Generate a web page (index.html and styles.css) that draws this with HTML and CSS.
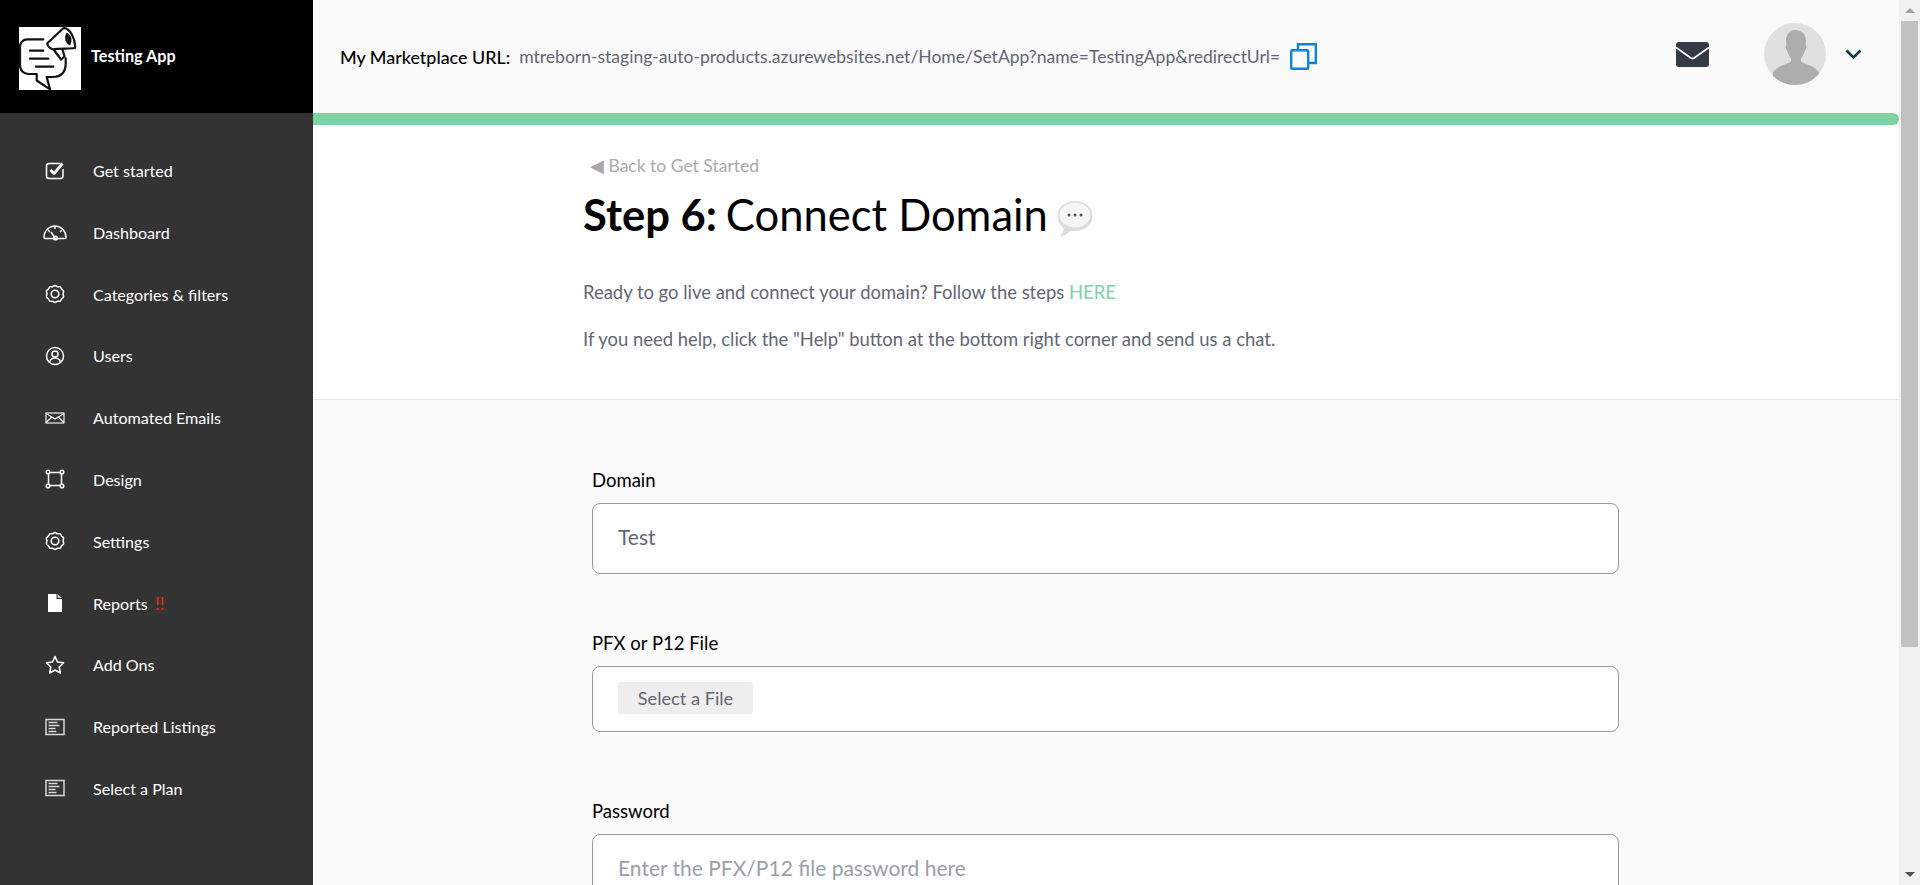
FILE: index.html
```html
<!DOCTYPE html>
<html lang="en">
<head>
<meta charset="utf-8">
<title>Testing App</title>
<link rel="stylesheet" href="styles.css">
</head>
<body>
<div class="app">
  <aside class="sidebar">
    <div class="brand">
      <div class="logo">
        <svg viewBox="0 0 62 63" width="62" height="63" fill="none" stroke="#111" stroke-width="2.2" stroke-linecap="round" stroke-linejoin="round">
          <path d="M24.300 12.300H8.500C4 12.300 1 15.500 1 19.700V38c0 5.500 3.500 9 8.300 9h8.400v6.500L31 62.300 27.700 50h5.800c8 0 13.200-4 13.200-13.700v-5"/>
          <path d="M11 23.700h13.300M11 31.700h18.300M17 39.700h17.300"/>
          <path d="M28.300 16.300 44.300 1.300C50 0 57 12 56 21c-6 1-16 0-22 1.500-3-1-6-4.500-5.700-6.200z"/>
          <path d="M35 23l7 9.500 3.500-3-2-7"/>
          <path d="M48 7c3 2 4 6 2.500 10-3-2-4-6-2.500-10z" fill="#111"/>
        </svg>
      </div>
      <span class="brand-name">Testing App</span>
    </div>
    <nav class="nav">
      <a class="nav-item"><svg class="nav-icon" viewBox="0 0 20 20"><path d="M15.500 3.500H4c-1.500 0-2.500 1-2.500 2.500v10c0 1.500 1 2.500 2.500 2.500h11.500c1.500 0 2.500-1 2.500-2.500V9" class="ln"/><path d="M5.500 10l3.500 3.500 8.500-10" class="ln thick"/></svg><span>Get started</span></a>
      <a class="nav-item"><svg class="nav-icon nav-icon-wide" viewBox="0 0 24 20"><path d="M1 15.500C1 9 6 4 12 4s11 5 11 11.500c0 .5-.3 1-1 1H2c-.7 0-1-.5-1-1z" class="ln"/><path d="M12 4v3M5 8l2 2M19 8l-2 2M8 10l4 6" class="ln"/><circle cx="12.500" cy="16" r="1.800" class="ln"/></svg><span>Dashboard</span></a>
      <a class="nav-item"><svg class="nav-icon" viewBox="0 0 20 20"><path d="M10 1.500c1 0 1.500 1 2.500 1.200s2-.4 2.800.2.700 1.700 1.400 2.400 1.700 1 1.900 1.900-.6 1.800-.6 2.800.8 1.900.6 2.800-1.200 1.200-1.900 1.900-.6 1.800-1.400 2.400-1.800 0-2.800.2-1.500 1.200-2.500 1.200-1.500-1-2.500-1.200-2 .4-2.800-.2-.7-1.700-1.400-2.400-1.700-1-1.900-1.900.6-1.800.6-2.800-.8-1.900-.6-2.800 1.200-1.200 1.900-1.900.6-1.800 1.400-2.400 1.800 0 2.800-.2 1.500-1.200 2.500-1.200z" class="ln"/><circle cx="10" cy="10" r="3.800" class="ln"/></svg><span>Categories &amp; filters</span></a>
      <a class="nav-item"><svg class="nav-icon" viewBox="0 0 20 20"><circle cx="10" cy="10" r="8.500" class="ln"/><circle cx="10" cy="8" r="3" class="ln"/><path d="M4.500 16c1-3 3-4 5.500-4s4.500 1 5.500 4" class="ln"/></svg><span>Users</span></a>
      <a class="nav-item"><svg class="nav-icon" viewBox="0 0 20 20"><rect x="1" y="5" width="18" height="10" class="ln thin"/><path d="M1 5.500l9 5.500 9-5.500M1 14.500l6-5.500M19 14.500 13 9" class="ln thin"/></svg><span>Automated Emails</span></a>
      <a class="nav-item"><svg class="nav-icon" viewBox="0 0 20 20"><path d="M3.500 5v10M16.500 5v10M5 3.500h10M5 16.500h10" class="ln"/><circle cx="3" cy="3" r="1.800" class="ln"/><circle cx="17" cy="3" r="1.800" class="ln"/><circle cx="3" cy="17" r="1.800" class="ln"/><circle cx="17" cy="17" r="1.800" class="ln"/></svg><span>Design</span></a>
      <a class="nav-item"><svg class="nav-icon" viewBox="0 0 20 20"><path d="M10 1.500c1 0 1.500 1 2.500 1.200s2-.4 2.800.2.700 1.700 1.400 2.400 1.700 1 1.900 1.900-.6 1.800-.6 2.800.8 1.900.6 2.800-1.200 1.200-1.900 1.900-.6 1.800-1.400 2.400-1.800 0-2.800.2-1.500 1.200-2.500 1.200-1.500-1-2.500-1.200-2 .4-2.800-.2-.7-1.700-1.400-2.400-1.700-1-1.900-1.900.6-1.800.6-2.800-.8-1.900-.6-2.800 1.200-1.200 1.900-1.900.6-1.800 1.400-2.400 1.800 0 2.800-.2 1.500-1.200 2.500-1.200z" class="ln"/><circle cx="10" cy="10" r="3.800" class="ln"/></svg><span>Settings</span></a>
      <a class="nav-item"><svg class="nav-icon" viewBox="0 0 20 20"><path d="M3 1h8.500v5H17v13H3z" fill="#fff"/><path d="M12.500 1 17 5h-4.500z" fill="#ccc"/></svg><span>Reports <b class="alert">!!</b></span></a>
      <a class="nav-item"><svg class="nav-icon" viewBox="0 0 20 20"><path d="M10 1.500l2.600 5.600 6 .7-4.400 4.200 1.200 6L10 15l-5.400 3 1.200-6L1.400 7.800l6-.7z" class="ln"/></svg><span>Add Ons</span></a>
      <a class="nav-item"><svg class="nav-icon" viewBox="0 0 20 20"><rect x="1" y="2.500" width="18" height="15" class="ln soft"/><path d="M3.500 5.500h9M3.500 8.500h11M3.500 11.500h7M3.500 14.500h8" class="ln soft"/></svg><span>Reported Listings</span></a>
      <a class="nav-item"><svg class="nav-icon" viewBox="0 0 20 20"><rect x="1" y="2.500" width="18" height="15" class="ln soft"/><path d="M3.500 5.500h9M3.500 8.500h11M3.500 11.500h7M3.500 14.500h8" class="ln soft"/></svg><span>Select a Plan</span></a>
    </nav>
  </aside>

  <main class="main">
    <header class="topbar">
      <div class="url-row">
        <strong class="url-label">My Marketplace URL:</strong>
        <span class="url-value">mtreborn-staging-auto-products.azurewebsites.net/Home/SetApp?name=TestingApp&amp;redirectUrl=</span>
        <svg class="copy-icon" viewBox="0 0 27 27" width="27" height="27" fill="none" stroke="#0a84e0" stroke-width="2.400"><rect x="1.200" y="7.200" width="17" height="18.600" rx="1"/><path d="M8 7V1.200h17.800V20H18.500"/></svg>
      </div>
      <div class="top-actions">
        <svg class="mail-icon" viewBox="0 0 33 25" width="33" height="25"><rect width="33" height="25" rx="3" fill="#343a46"/><path d="M0 5.500l14.500 10.300c1.200.8 2.800.8 4 0L33 5.500" fill="none" stroke="#fafafa" stroke-width="1.800"/></svg>
        <svg class="avatar" viewBox="0 0 62 62" width="62" height="62"><defs><clipPath id="avatar-clip"><circle cx="31" cy="31" r="31"/></clipPath></defs><circle cx="31" cy="31" r="31" fill="#e0e0e0"/><path clip-path="url(#avatar-clip)" d="M31 7c6.500 0 11 4 11 10 0 2-.3 3.500-.5 5l1 1.500c0 2-1 4-2 5-.7 3-2 5-3.500 7v3c4 3 14 4 18 11l2 13H7l2-13c4-7 14-8 18-11v-3c-1.500-2-2.800-4-3.500-7-1-1-2-3-2-5l1-1.500c-.2-1.500-.5-3-.5-5 0-6 4.500-10 9-10z" fill="#adadad"/></svg>
        <svg class="chevron" viewBox="0 0 17 10" width="17" height="10"><path d="M1.500 1.500l7 7 7-7" fill="none" stroke="#0d3a3f" stroke-width="2.600"/></svg>
      </div>
    </header>
    <div class="progress"></div>

    <section class="hero">
      <a class="back">◀ Back to Get Started</a>
      <h1 class="title"><b>Step 6:</b> Connect Domain
        <svg class="bubble" viewBox="0 0 36 36" width="36" height="36"><path d="M18 1c10 0 17.500 6.500 17.500 15S28 31 18 31c-1.500 0-3-.2-4.400-.5C11 33.500 7 36 3.500 36c1.800-2 3-5 3.200-8C2.800 25 .5 20.800.5 16 .5 7.500 8 1 18 1z" fill="#dcdcdc"/><ellipse cx="18" cy="15" rx="15.500" ry="12.500" fill="#f6f6f6"/><circle cx="12" cy="15" r="1.500" fill="#555"/><circle cx="18" cy="15" r="1.500" fill="#555"/><circle cx="24" cy="15" r="1.500" fill="#555"/></svg>
      </h1>
      <p class="lead">Ready to go live and connect your domain? Follow the steps <a class="here">HERE</a></p>
      <p class="lead">If you need help, click the "Help" button at the bottom right corner and send us a chat.</p>
    </section>

    <section class="form">
      <div class="field field-domain">
        <label class="field-label label-tight">Domain</label>
        <input class="text-input" type="text" value="Test">
      </div>
      <div class="field field-file">
        <label class="field-label label-tight">PFX or P12 File</label>
        <div class="file-box"><button class="file-btn" type="button">Select a File</button></div>
      </div>
      <div class="field">
        <label class="field-label label-tight">Password</label>
        <input class="text-input" type="text" placeholder="Enter the PFX/P12 file password here">
      </div>
    </section>
  </main>

  <div class="scrollbar">
    <div class="sb-btn"><span class="sb-up"></span></div>
    <div class="sb-thumb"></div>
    <div class="sb-track"></div>
    <div class="sb-btn"><span class="sb-down"></span></div>
  </div>
</div>
</body>
</html>
```

FILE: styles.css
```css
* { box-sizing: border-box; }
html, body { margin: 0; height: 100%; overflow: hidden; }
body { font-family: Lato, "Liberation Sans", sans-serif; color: #000; background: #fafafa; }

.app { display: flex; height: 100vh; overflow: hidden; }

/* sidebar */
.sidebar { flex: 0 0 313px; background: #333; color: #fff; }
.brand { height: 113px; background: #000; display: flex; align-items: center; padding: 4px 0 0 19px; gap: 9px; }
.logo { width: 62px; height: 63px; background: #fff; overflow: hidden; line-height: 0; }
.brand-name { font-size: 16.2px; font-weight: 700; margin: 0 0 6px 1px; }
.nav { padding-top: 26.6px; }
.nav-item { height: 61.8px; display: flex; align-items: center; padding-left: 44px; gap: 27px; font-size: 16.1px; color: #fff; }
.nav-icon { width: 22px; height: 20px; flex: none; fill: none; }
.nav-icon-wide { width: 24px; margin: 0 -1px; }
.ln { fill: none; stroke: #fff; stroke-width: 1.500; stroke-linejoin: round; }
.thick { stroke-width: 2.800; }
.thin { stroke-width: 1.100; stroke-linejoin: miter; }
.soft { stroke: #d8d8d8; stroke-linejoin: miter; }
.alert { color: #e8321c; font-weight: 400; font-size: 18px; line-height: 16px; margin-left: 3px; }

/* main column */
.main { flex: 1 1 auto; min-width: 0; display: flex; flex-direction: column; }
.topbar { flex: none; height: 113px; background: #fafafa; display: flex; align-items: center; justify-content: space-between; padding: 0 37px 0 27px; }
.url-row { display: flex; align-items: center; gap: 9px; }
.url-label { font-size: 17.900px; font-weight: 500; color: #000; }
.url-value { font-size: 17.550px; color: #606773; }
.copy-icon { flex: none; margin-left: 1px; }
.top-actions { display: flex; align-items: center; padding-bottom: 4px; }
.mail-icon { margin-right: 55px; }
.avatar { margin: 0 19px 2px 0; }
.chevron { margin-bottom: 2px; }
.progress { flex: none; height: 12px; background: #7dd3a3; border-radius: 0 6px 6px 0; }

.hero { flex: none; height: 275px; background: #fff; border-bottom: 1px solid #e6e6e6; padding: 31px 0 0 270px; }
.back { display: block; font-size: 17.500px; line-height: 20px; color: #aaa; padding-left: 7px; }
.title { margin: 9px 0 36px; font-size: 43.500px; font-weight: 400; line-height: 58px; color: #000; display: flex; align-items: center; gap: 9px; }
.title b { font-weight: 700; }
.bubble { flex: none; margin-top: 8px; }
.lead { margin: 0 0 21px; font-size: 18.430px; line-height: 26px; color: #5f6773; }
.here { color: #7dd3a3; }

.form { flex: 1; padding: 68px 0 0 279px; background: #fafafa; }
.field { width: 1027px; }
.field-domain { margin-bottom: 57px; }
.field-file { margin-bottom: 67px; }
.field-label { display: block; font-size: 18.500px; line-height: 24px; color: #000; }
.label-tight { margin-bottom: 11px; }
.text-input { display: block; width: 100%; height: 71px; padding: 0 25px 4px; border: 1px solid #999; border-radius: 8px; background: #fff; font: 400 21px Lato, "Liberation Sans", sans-serif; color: #5f6773; outline: none; }
.text-input::placeholder { color: #9aa0a8; opacity: 1; }
.file-box { height: 66px; border: 1px solid #999; border-radius: 8px; background: #fff; display: flex; align-items: center; padding: 0 0 2px 25px; }
.file-btn { width: 135px; height: 32px; border: 0; border-radius: 3px; background: #eee; padding: 0; font: 400 18.200px Lato, "Liberation Sans", sans-serif; color: #5f6773; }

/* scrollbar */
.scrollbar { flex: 0 0 21px; background: #f1f1f1; display: flex; flex-direction: column; padding: 0 2px; }
.sb-btn { flex: none; height: 21px; display: flex; align-items: center; justify-content: center; }
.sb-up { width: 0; height: 0; border: 5px solid transparent; border-top: 0; border-bottom: 5px solid #a3a3a3; }
.sb-down { width: 0; height: 0; border: 5px solid transparent; border-bottom: 0; border-top: 5px solid #505050; }
.sb-thumb { flex: none; height: 626px; background: #c1c1c1; }
.sb-track { flex: 1; }
```
